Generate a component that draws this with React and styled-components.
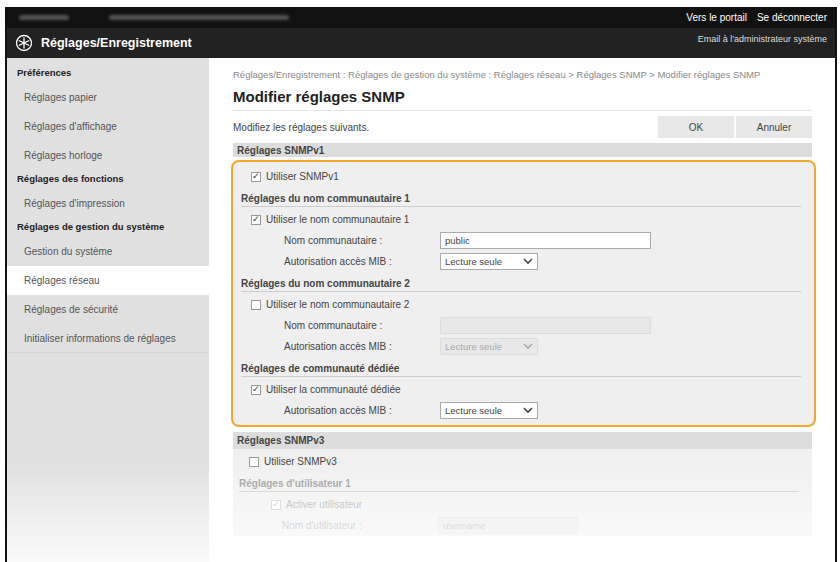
import styled, { createGlobalStyle } from "styled-components";

const Global = createGlobalStyle`
  html, body { margin: 0; background: #fff; }
  body { font-family: "Liberation Sans", Arial, sans-serif; font-size: 10px; color: #333; }
  * { box-sizing: border-box; }
`;

const Frame = styled.div`
  position: relative;
  margin: 7px 3px 0 5px;
  height: 555px;
  overflow: hidden;
  border-left: 2px solid #111;
  border-right: 2px solid #111;
  display: flex;
  flex-direction: column;
`;

const TopBar = styled.div`
  height: 21px;
  background: #111;
  display: flex;
  align-items: center;
  padding: 0 8px 0 12px;
  gap: 40px;
  color: #fff;
`;

const Blur = styled.div`
  height: 5px;
  width: ${(p) => p.w}px;
  background: #555;
  border-radius: 3px;
  filter: blur(1.5px);
`;

const Links = styled.div`
  margin-left: auto;
  display: flex;
  gap: 10px;
  font-size: 10px;
`;

const TitleBar = styled.div`
  height: 30px;
  background: #222;
  display: flex;
  align-items: center;
  padding: 0 8px 0 8px;
  color: #fff;
  gap: 8px;
`;

const AppName = styled.div`
  font-weight: bold;
  font-size: 12.5px;
`;

const Mail = styled.div`
  margin-left: auto;
  font-size: 9px;
  color: #ddd;
  align-self: flex-start;
  margin-top: 6px;
`;

const Body = styled.div`
  flex: 1;
  display: flex;
`;

const Side = styled.div`
  width: 202px;
  background: #e0e0e0;
  display: flex;
  flex-direction: column;
  padding-top: 6px;
`;

const Group = styled.div`
  font-weight: bold;
  font-size: 9.5px;
  color: #222;
  padding: 3px 10px 5px;
`;

const Item = styled.div`
  padding: 0 17px;
  height: 29px;
  display: flex;
  align-items: center;
  color: #555;
  background: ${(p) => (p.active ? "#fff" : "transparent")};
  border-bottom: ${(p) => (p.last ? "1px solid #d4d4d4" : "none")};
`;

const Main = styled.div`
  flex: 1;
  padding: 12px 23px 0 24px;
`;

const Crumb = styled.div`
  color: #888;
  font-size: 9.5px;
  line-height: 10px;
  max-width: 570px;
`;

const H1 = styled.h1`
  margin: 8px 0 0;
  font-size: 15px;
  color: #222;
  padding-bottom: 5px;
  border-bottom: 1px solid #e4e4e4;
`;

const Bar = styled.div`
  display: flex;
  align-items: center;
  margin-top: 5px;
  color: #444;
`;

const Btn = styled.div`
  width: 76px;
  height: 22px;
  margin-left: 2px;
  background: #e8e8e8;
  display: flex;
  align-items: center;
  justify-content: center;
  color: #444;
  &:first-of-type { margin-left: auto; }
`;

const Section = styled.div`
  margin-top: 5px;
  background: #dcdcdc;
  height: ${(p) => p.h || 14}px;
  display: flex;
  align-items: center;
  padding-left: 4px;
  font-weight: bold;
  color: #444;
`;

const Box = styled.div`
  margin: 3px -4px 0 -2px;
  border: 2px solid #f2a62a;
  border-radius: 8px;
  background: #efefef;
  padding: 4px 0 4px 8px;
`;

const Plain = styled.div`
  background: #f0f0f0;
  padding: 2px 0 0 6px;
`;

const Row = styled.div`
  display: flex;
  align-items: center;
  height: 21px;
  padding-left: ${(p) => p.indent || 10}px;
  color: ${(p) => (p.faded ? "#aaa" : "#444")};
  gap: 5px;
`;

const Check = styled.span`
  width: 10px;
  height: 10px;
  border: 1px solid ${(p) => (p.faded ? "#ccc" : "#999")};
  background: #fff;
  display: inline-flex;
  align-items: center;
  justify-content: center;
  font-size: 9px;
  line-height: 1;
  color: ${(p) => (p.faded ? "#bbb" : "#333")};
`;

const Sub = styled.div`
  font-weight: bold;
  margin: 3px 13px 2px 0;
  padding-bottom: 2px;
  border-bottom: 1px solid #ccc;
  height: 17px;
  display: flex;
  align-items: flex-end;
  color: ${(p) => (p.faded ? "#999" : "#444")};
`;

const Label = styled.div`
  width: 184px;
  padding-left: 33px;
`;

const Input = styled.div`
  width: ${(p) => p.w || 211}px;
  height: 17px;
  border: 1px solid ${(p) => (p.disabled ? "#ddd" : "#aaa")};
  background: ${(p) => (p.disabled ? "#e8e8e8" : "#fff")};
  color: ${(p) => (p.disabled ? "#aaa" : "#444")};
  padding: 0 4px;
  display: flex;
  align-items: center;
  justify-content: space-between;
  font-size: 9.5px;
`;

const Fade = styled.div`
  position: absolute;
  left: 0;
  right: 0;
  bottom: 0;
  height: 100px;
  background: linear-gradient(rgba(255,255,255,0), rgba(255,255,255,0.85));
  pointer-events: none;
`;

const Chevron = () => (
  <svg width="10" height="7" viewBox="0 0 10 7">
    <path d="M1 1l4 4 4-4" fill="none" stroke="currentColor" strokeWidth="1.6" />
  </svg>
);

const Logo = () => (
  <svg width="18" height="18" viewBox="0 0 18 18">
    <circle cx="9" cy="9" r="7.5" fill="none" stroke="#fff" strokeWidth="1.3" />
    <path d="M9 3.5v11M3.8 6.5l10.4 5M3.8 11.5l10.4-5" stroke="#fff" strokeWidth="1.3" />
  </svg>
);

const Select = ({ disabled }) => (
  <Input w={98} disabled={disabled}>
    Lecture seule <Chevron />
  </Input>
);

export default function App() {
  return (
    <>
      <Global />
      <Frame>
        <TopBar>
          <Blur w={50} />
          <Blur w={180} />
          <Links>
            <span>Vers le portail</span>
            <span>Se déconnecter</span>
          </Links>
        </TopBar>
        <TitleBar>
          <Logo />
          <AppName>Réglages/Enregistrement</AppName>
          <Mail>Email à l'administrateur système</Mail>
        </TitleBar>
        <Body>
          <Side>
            <Group>Préférences</Group>
            <Item>Réglages papier</Item>
            <Item>Réglages d'affichage</Item>
            <Item>Réglages horloge</Item>
            <Group>Réglages des fonctions</Group>
            <Item>Réglages d'impression</Item>
            <Group>Réglages de gestion du système</Group>
            <Item>Gestion du système</Item>
            <Item active>Réglages réseau</Item>
            <Item>Réglages de sécurité</Item>
            <Item last>Initialiser informations de réglages</Item>
          </Side>
          <Main>
            <Crumb>
              Réglages/Enregistrement : Réglages de gestion du système : Réglages réseau &gt; Réglages SNMP &gt; Modifier réglages SNMP
            </Crumb>
            <H1>Modifier réglages SNMP</H1>
            <Bar>
              Modifiez les réglages suivants.
              <Btn>OK</Btn>
              <Btn>Annuler</Btn>
            </Bar>
            <Section>Réglages SNMPv1</Section>
            <Box>
              <Row><Check>✓</Check>Utiliser SNMPv1</Row>
              <Sub>Réglages du nom communautaire 1</Sub>
              <Row><Check>✓</Check>Utiliser le nom communautaire 1</Row>
              <Row><Label>Nom communautaire :</Label><Input>public</Input></Row>
              <Row><Label>Autorisation accès MIB :</Label><Select /></Row>
              <Sub>Réglages du nom communautaire 2</Sub>
              <Row><Check />Utiliser le nom communautaire 2</Row>
              <Row><Label>Nom communautaire :</Label><Input disabled /></Row>
              <Row><Label>Autorisation accès MIB :</Label><Select disabled /></Row>
              <Sub>Réglages de communauté dédiée</Sub>
              <Row><Check>✓</Check>Utiliser la communauté dédiée</Row>
              <Row><Label>Autorisation accès MIB :</Label><Select /></Row>
            </Box>
            <Section h={17}>Réglages SNMPv3</Section>
            <Plain>
              <Row><Check />Utiliser SNMPv3</Row>
              <Sub faded>Réglages d'utilisateur 1</Sub>
              <Row indent={32} faded><Check faded>✓</Check>Activer utilisateur</Row>
              <Row faded><Label>Nom d'utilisateur :</Label><Input w={140} disabled>username</Input></Row>
            </Plain>
          </Main>
        </Body>
        <Fade />
      </Frame>
    </>
  );
}
